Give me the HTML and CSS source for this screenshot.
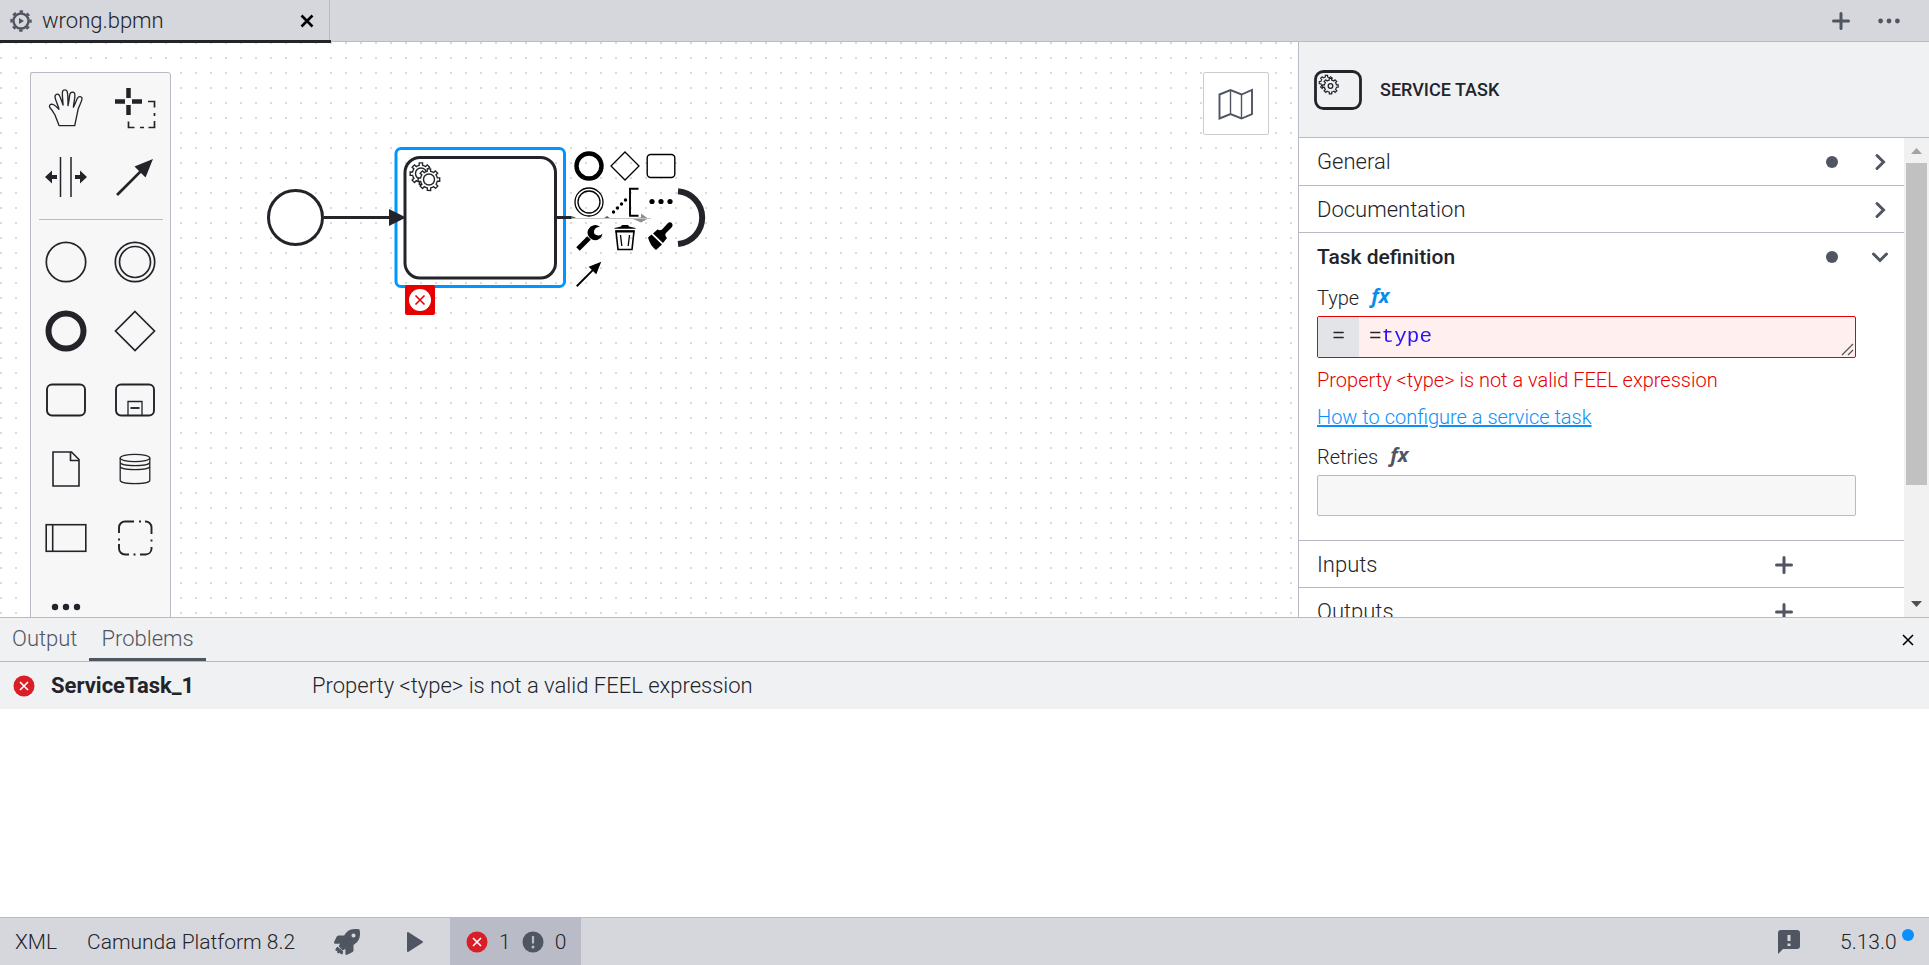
FILE: index.html
```html
<!DOCTYPE html>
<html lang="en">
<head>
<meta charset="utf-8">
<title>wrong.bpmn</title>
<link rel="stylesheet" href="styles.css">
</head>
<body>
<svg class="defs" width="0" height="0" aria-hidden="true">
  <symbol id="gear" viewBox="-9 -9 18 18" overflow="visible">
    <path d="m 1.11,7.3 v -1.71335 c 0.352326,-0.0705 0.703932,-0.17838 1.047628,-0.32133 0.344416,-0.14465 0.665822,-0.32133 0.966377,-0.52145 l 1.19431,1.18005 1.567487,-1.57688 -1.195028,-1.18014 c 0.403376,-0.61394 0.683079,-1.29908 0.825447,-2.01824 l 1.622133,-0.01 v -2.2196 l -1.636514,0.01 c -0.07333,-0.35153 -0.178319,-0.70024 -0.323564,-1.04372 -0.145244,-0.34406 -0.321407,-0.6644 -0.522735,-0.96217 l 1.131035,-1.13631 -1.583305,-1.56293 -1.129598,1.13589 c -0.614052,-0.40108 -1.302883,-0.68093 -2.022633,-0.82247 l 0.0093,-1.61852 h -2.241173 l 0.0042,1.63124 c -0.353763,0.0736 -0.705369,0.17977 -1.049785,0.32371 -0.344415,0.14437 -0.665102,0.32092 -0.9635006,0.52006 l -1.1698628,-1.15823 -1.5667691,1.5792 1.1684265,1.15669 c -0.4026573,0.61283 -0.68308,1.29797 -0.8247287,2.01713 l -1.6588041,0.003 v 2.22174 l 1.6724648,-0.006 c 0.073327,0.35077 0.1797598,0.70243 0.3242851,1.04472 0.1452428,0.34448 0.3214064,0.6644 0.5227339,0.96066 l -1.1993431,1.19723 1.5840256,1.56011 1.1964668,-1.19348 c 0.6140517,0.40346 1.3028827,0.68232 2.0233517,0.82331 l 0.0007,1.69892 z"/>
  </symbol>
  <symbol id="error" viewBox="0 0 22 22">
    <circle cx="11" cy="11" r="10.5" fill="#da1e28"/>
    <path d="M7 7l8 8M15 7l-8 8" stroke="#fff" stroke-width="1.6"/>
  </symbol>
  <symbol id="plus" viewBox="0 0 18 18">
    <path d="M9 1.500v15M1.500 9h15" stroke="currentColor" stroke-width="3" stroke-linecap="round"/>
  </symbol>
  <symbol id="arrow" viewBox="0 0 36 36">
    <path d="M1 35L25 11" stroke="currentColor" stroke-width="2.6"/>
    <path d="M35 1L17.500 8l10.500 10.500z" fill="currentColor"/>
  </symbol>
</svg>

<header class="tabbar">
  <div class="tab">
    <svg class="tab-icon" viewBox="0 0 22 22" width="22" height="22" aria-hidden="true">
      <circle cx="11" cy="11" r="7.500" fill="none" stroke="#505562" stroke-width="2.400"/>
      <circle cx="11" cy="11" r="9.500" fill="none" stroke="#505562" stroke-width="2.400" stroke-dasharray="3.500 3.961" stroke-dashoffset="1.750"/>
      <path d="M9 8v6l5-3z" fill="#505562"/>
    </svg>
    <a class="tab-name" href="#wrong">wrong.bpmn</a>
    <button class="icon-btn tab-close" aria-label="Close tab">
      <svg viewBox="0 0 14 14" width="14" height="14"><path d="M1.500 1.500l11 11M12.500 1.500l-11 11" stroke="#000" stroke-width="2.600"/></svg>
    </button>
  </div>
  <div class="tab-actions">
    <button class="icon-btn" aria-label="New tab"><svg width="18" height="18"><use href="#plus"/></svg></button>
    <button class="icon-btn" aria-label="More tabs"><svg viewBox="0 0 22 6" width="22" height="6" fill="#505562"><circle cx="2.600" cy="3" r="2.400"/><circle cx="11" cy="3" r="2.400"/><circle cx="19.400" cy="3" r="2.400"/></svg></button>
  </div>
</header>

<main class="workspace">
  <section class="canvas" id="wrong" aria-label="Diagram">
    <svg class="diagram" width="1298" height="575" role="img" aria-label="Start event, service task, end event">
      <rect x="396" y="106.500" width="168.500" height="138" rx="5" fill="none" stroke="#0095ff" stroke-width="3"/>
      <g fill="none" stroke="#22242a" stroke-width="3">
        <circle cx="295.500" cy="175.500" r="27" fill="#fff"/>
        <path d="M324 175.500h70"/>
        <rect x="405" y="115.500" width="150.500" height="120.500" rx="15" fill="#fff"/>
        <path d="M389 167l17 8.500-17 8.500z" fill="#22242a" stroke="none"/>
        <path d="M556 175.500h15"/>
        <path d="M678 149.200a26.500 26.500 0 0 1 0 52.800" stroke-width="6"/>
        <g stroke-width=".9" fill="#fff">
          <use href="#gear" x="-9" y="-9" width="18" height="18" transform="translate(421 131.500) scale(1.5)"/>
          <circle cx="421" cy="131.500" r="5.500" stroke-width="1.400"/>
          <use href="#gear" x="-9" y="-9" width="18" height="18" transform="translate(429 137.500) scale(1.5)"/>
          <circle cx="429" cy="137.500" r="5.500" stroke-width="1.400"/>
        </g>
      </g>
      <path d="M571 174l5 1.500-5 1.500zM603 177l4-3 4 3z" fill="#55565c"/>
      <path d="M632 176.500l9-1v-4l7 5-7 4z" fill="#8d8e92"/>
      <path d="M572 176.500h79" stroke="#c4c5c8"/>
    </svg>

    <nav class="palette" aria-label="Tools">
      <button class="tool" aria-label="Hand tool"><svg viewBox="0 0 42 42" width="42" height="42" fill="none" stroke="#22242a" stroke-width="1.200" stroke-linejoin="round"><path d="M17 38.500h14l3-15c1-3 4-9 3.500-10.500-.8-2-3-1.500-4 0-1 2-2.500 6.500-3.700 8.500.3-5 2.300-10.500 1-13-1-1.500-3.500-1-4 .5-.7 3-.8 7-1.800 11 0-4-.2-11-.7-13-.7-2-3.600-2-4.200 0-.5 3 .4 9 .5 12.500-1.200-3-2.200-7.500-3.500-9.300-1.200-1.500-3.700-.7-3.700 1.200 0 3.500 3 8.500 3.500 12-2-1.800-4-4.800-6.500-4.800-1.800.2-2.500 2-1.500 3.400 2 2 3.300 4.500 4.600 7 1 3 2.500 6 3.500 9.500z" transform="translate(-5 -3) scale(1.12 1.08)"/></svg></button>
      <button class="tool" aria-label="Lasso tool"><svg viewBox="0 0 42 42" width="42" height="42" fill="none" stroke="#22242a"><path d="M14.500 1v10M14.500 18v10M1 14.500h10M18 14.500h10" stroke-width="4.500"/><path d="M34 14.500h6.500v6M40.500 26v3M40.500 34v6.500h-6M30 40.500h-4M20.500 40.500h-6v-6" stroke-width="1.700"/></svg></button>
      <button class="tool" aria-label="Space tool"><svg viewBox="0 0 42 42" width="42" height="42" fill="#22242a"><path d="M15.500 1v40M26 1v40" stroke="#22242a" stroke-width="1.500"/><path d="M0 21l7-6.500v4.500h5v4h-5v4.500zM42 21l-7-6.500v4.500h-5v4h5v4.500z"/></svg></button>
      <button class="tool" aria-label="Connect tool"><svg width="38" height="38"><use href="#arrow"/></svg></button>
      <hr class="palette-line">
      <button class="tool" aria-label="Start event"><svg viewBox="0 0 42 42" width="42" height="42" fill="none" stroke="#22242a"><circle cx="21" cy="21" r="19.700" stroke-width="1.700"/></svg></button>
      <button class="tool" aria-label="Intermediate event"><svg viewBox="0 0 42 42" width="42" height="42" fill="none" stroke="#22242a" stroke-width="1.700"><circle cx="21" cy="21" r="19.700"/><circle cx="21" cy="21" r="15.500"/></svg></button>
      <button class="tool" aria-label="End event"><svg viewBox="0 0 42 42" width="42" height="42" fill="none" stroke="#22242a"><circle cx="21" cy="21" r="17.500" stroke-width="6"/></svg></button>
      <button class="tool" aria-label="Gateway"><svg viewBox="0 0 42 42" width="42" height="42" fill="none" stroke="#22242a" stroke-width="1.700"><path d="M21 1.500L40.500 21 21 40.500 1.500 21z"/></svg></button>
      <button class="tool" aria-label="Task"><svg viewBox="0 0 42 42" width="42" height="42" fill="none" stroke="#22242a" stroke-width="1.900"><rect x="2" y="5.500" width="38" height="31" rx="5"/></svg></button>
      <button class="tool" aria-label="Sub-process"><svg viewBox="0 0 42 42" width="42" height="42" fill="none" stroke="#22242a" stroke-width="1.900"><rect x="2" y="5.500" width="38" height="31" rx="5"/><path d="M14 36v-13.500h14V36" stroke-width="1.300"/><path d="M16.500 29h9"/></svg></button>
      <button class="tool" aria-label="Data object"><svg viewBox="0 0 42 42" width="42" height="42" fill="none" stroke="#22242a" stroke-width="1.600"><path d="M8 4h18.500l7.500 7.500V38H8zM25.500 4v8.500H34"/></svg></button>
      <button class="tool" aria-label="Data store"><svg viewBox="0 0 42 42" width="42" height="42" fill="none" stroke="#22242a" stroke-width="1.300"><ellipse cx="21" cy="10" rx="14.800" ry="3.700"/><path d="M6.200 10v22.300c0 4.500 29.600 4.500 29.600 0V10M6.200 14.300c0 4.500 29.600 4.500 29.600 0M6.200 18.300c0 4.500 29.600 4.500 29.600 0"/></svg></button>
      <button class="tool" aria-label="Pool"><svg viewBox="0 0 42 42" width="42" height="42" fill="none" stroke="#22242a" stroke-width="1.600"><rect x="1.200" y="7.700" width="39.600" height="26.600"/><path d="M7.700 8v26"/></svg></button>
      <button class="tool" aria-label="Group"><svg viewBox="0 0 42 42" width="42" height="42" fill="none" stroke="#22242a" stroke-width="1.900"><path d="M5 16v-5.500a6 6 0 0 1 6-6h9M25 4.500h2M31 4.500a6 6 0 0 1 6.500 6V17M37.500 22.500v2M37.500 30v2a6 6 0 0 1-6 5.500H26M21.500 37.500h-2M15 37.500h-4a6 6 0 0 1-6-6V27M5 23.500v-2"/></svg></button>
      <button class="tool" aria-label="More elements"><svg viewBox="0 0 42 42" width="42" height="42" fill="#22242a"><circle cx="10" cy="21" r="3.200"/><circle cx="21" cy="21" r="3.200"/><circle cx="32" cy="21" r="3.200"/></svg></button>
    </nav>

    <div class="context-pad">
      <button class="pad" aria-label="Append end event"><svg viewBox="0 0 30 30" width="30" height="30" fill="none" stroke="#000"><circle cx="15" cy="15" r="12.500" stroke-width="4.400"/></svg></button>
      <button class="pad" aria-label="Append gateway"><svg viewBox="0 0 30 30" width="30" height="30" fill="none" stroke="#000" stroke-width="1.300"><path d="M15 1l14 14-14 14L1 15z"/></svg></button>
      <button class="pad" aria-label="Append task"><svg viewBox="0 0 30 30" width="30" height="30" fill="none" stroke="#000" stroke-width="1.400"><rect x="1.200" y="3.500" width="27.600" height="23" rx="3.500"/></svg></button>
      <button class="pad" aria-label="Append intermediate event"><svg viewBox="0 0 30 30" width="30" height="30" fill="none" stroke="#000" stroke-width="1.300"><circle cx="15" cy="15" r="14"/><circle cx="15" cy="15" r="11"/></svg></button>
      <button class="pad" aria-label="Add text annotation"><svg viewBox="0 0 30 30" width="30" height="30"><path d="M28.500 1.700H20v27h8.500" fill="none" stroke="#000" stroke-width="1.900"/><circle cx="3.500" cy="25" r="1.700"/><circle cx="7.500" cy="21" r="1.700"/><circle cx="11.500" cy="17" r="1.700"/><circle cx="15.500" cy="13" r="1.700"/></svg></button>
      <button class="pad" aria-label="Append element"><svg viewBox="0 0 30 30" width="30" height="30"><circle cx="6" cy="14.500" r="2.600"/><circle cx="15" cy="14.500" r="2.600"/><circle cx="24" cy="14.500" r="2.600"/></svg></button>
      <button class="pad" aria-label="Change element"><svg viewBox="0 0 30 30" width="30" height="30"><path d="M4 26L15 15" stroke="#000" stroke-width="5"/><path d="M26 4A7.500 7.500 0 1 0 28.500 10.500A5.500 5.500 0 0 1 20.500 11A5 5 0 0 1 26 4z"/></svg></button>
      <button class="pad" aria-label="Delete"><svg viewBox="0 0 30 30" width="30" height="30"><path d="M4.500 5L11 3.500 12 2h6l1 1.500L25.500 5v.8h-21z"/><path d="M6 8h18l-2 18.500H8z" fill="none" stroke="#000" stroke-width="1.600"/><path d="M5.500 8.500h19" stroke="#000" stroke-width="2"/><path d="M10.500 12l1.300 11M19.500 12l-1.300 11" stroke="#000" stroke-width="1.300"/></svg></button>
      <button class="pad" aria-label="Set color"><svg viewBox="0 0 30 30" width="30" height="30" overflow="visible"><path d="M2 14.500l3.500-3 10.500 10-6 5.500C6 24 3.500 20 2 14.500z"/><path d="M7 10.500L11.500 6.500c2 1 3 1 4.500 0L22 0c2.500-2 6 1 4 4l-6 6c-1.500 2-.5 3 1 5l-4 5z"/></svg></button>
      <button class="pad" aria-label="Connect"><svg width="26" height="26"><use href="#arrow"/></svg></button>
    </div>

    <button class="badge" aria-label="Show error">
      <svg viewBox="0 0 22 22" width="22" height="22"><circle cx="11" cy="11" r="11" fill="#fff"/><path d="M6.500 6.500l9 9M15.500 6.500l-9 9" stroke="#e60000" stroke-width="1.600"/></svg>
    </button>

    <button class="minimap" aria-label="Open minimap">
      <svg viewBox="0 0 36 32" width="36" height="32" fill="none" stroke="#505562" stroke-width="1.900"><path d="M1.500 6.500L12.500 2l11 4.500L34 2v24l-10.500 4.500L12.500 26l-11 4.500z"/><path d="M12.500 2v24M23.500 6.500v24" stroke-width="1.400"/></svg>
    </button>
  </section>

  <aside class="properties">
    <header class="element">
      <svg viewBox="0 0 48 40" width="48" height="40" fill="none" stroke="#22242a" aria-hidden="true">
        <rect x="1.500" y="1.500" width="45" height="37" rx="8" stroke-width="2.800"/>
        <g stroke-width="1.100" fill="#f0f1f3">
          <use href="#gear" x="-9" y="-9" width="18" height="18" transform="translate(12.500 12.500)"/>
          <use href="#gear" x="-9" y="-9" width="18" height="18" transform="translate(16.500 16) scale(1.08)"/>
          <circle cx="16.500" cy="16" r="2.300" stroke-width="1.300"/>
        </g>
      </svg>
      <h1>SERVICE TASK</h1>
    </header>
    <div class="scroll">
      <div class="groups">
        <section class="group"><button class="group-head"><span class="group-name">General</span><span class="dot"></span><svg class="chevron" viewBox="0 0 18 18" width="18" height="18"><path d="M6 2.500L12.500 9 6 15.500"/></svg></button></section>
        <section class="group"><button class="group-head"><span class="group-name">Documentation</span><svg class="chevron" viewBox="0 0 18 18" width="18" height="18"><path d="M6 2.500L12.500 9 6 15.500"/></svg></button></section>
        <section class="group">
          <button class="group-head open"><span class="group-name">Task definition</span><span class="dot"></span><svg class="chevron" viewBox="0 0 18 18" width="18" height="18"><path d="M2.500 6L9 12.500 15.500 6"/></svg></button>
          <div class="fields">
            <div class="label-row"><label for="type">Type</label><button class="fx on" aria-label="Toggle expression">fx</button></div>
            <div class="feel"><span class="feel-mark">=</span><textarea id="type" rows="1" spellcheck="false">=type</textarea><svg class="grip" viewBox="0 0 13 13" width="13" height="13" aria-hidden="true"><path d="M1 12L12 1M7 12l5-5" stroke="#555" stroke-width="1.300"/></svg></div>
            <p class="error-text">Property &lt;type&gt; is not a valid FEEL expression</p>
            <a class="help" href="#help">How to configure a service task</a>
            <div class="label-row retries"><label for="retries">Retries</label><button class="fx" aria-label="Toggle expression">fx</button></div>
            <input class="text" id="retries" type="text">
          </div>
        </section>
        <section class="group"><div class="group-head"><span class="group-name">Inputs</span><button class="icon-btn add" aria-label="Create input"><svg width="18" height="18"><use href="#plus"/></svg></button></div></section>
        <section class="group"><div class="group-head"><span class="group-name">Outputs</span><button class="icon-btn add" aria-label="Create output"><svg width="18" height="18"><use href="#plus"/></svg></button></div></section>
      </div>
      <div class="scrollbar" aria-hidden="true">
        <svg viewBox="0 0 25 25" width="25" height="25"><path d="M7 16l5.500-6 5.500 6z" fill="#a3a3a3"/></svg>
        <div class="track"><div class="thumb"></div></div>
        <svg viewBox="0 0 25 25" width="25" height="25"><path d="M7 9l5.500 6L18 9z" fill="#505050"/></svg>
      </div>
    </div>
  </aside>
</main>

<section class="panel">
  <div class="panel-tabs">
    <button class="panel-tab">Output</button>
    <button class="panel-tab active">Problems</button>
    <button class="icon-btn panel-close" aria-label="Close panel"><svg viewBox="0 0 12 12" width="12" height="12"><path d="M1 1l10 10M11 1L1 11" stroke="#000" stroke-width="1.600"/></svg></button>
  </div>
  <button class="problem">
    <svg width="22" height="22"><use href="#error"/></svg>
    <strong class="problem-id">ServiceTask_1</strong>
    <span>Property &lt;type&gt; is not a valid FEEL expression</span>
  </button>
</section>

<footer class="statusbar">
  <button class="status xml">XML</button>
  <button class="status platform">Camunda Platform 8.2</button>
  <button class="status deploy" aria-label="Deploy"><svg viewBox="0 0 512 512" width="26" height="26" fill="#505562"><path d="M505.120 19.094c-1.189-5.531-6.658-11-12.207-12.188C460.716 0 435.507 0 410.407 0 307.175 0 245.269 55.203 199.052 128H94.838c-16.348.016-35.557 11.875-42.887 26.484L2.516 253.297A28.400 28.400 0 0 0 0 264a24 24 0 0 0 24 24h103.800l-22.470 22.470c-11.365 11.360-12.996 32.257 0 45.250l50.900 50.905c11.156 11.187 32.156 13.156 45.277 0L224 384.156V488a24 24 0 0 0 24 24 28.560 28.560 0 0 0 10.707-2.516l98.728-49.390c14.629-7.297 26.508-26.500 26.508-42.860V312.797C456.600 266.484 512 204.390 512 101.703c0-25.203 0-50.406-6.880-82.610zM384 168a40 40 0 1 1 40-40 40 40 0 0 1-40 40z"/><path d="M70 350c-40 20-50 65-35 85l30-6c-8 22 0 42 15 52l36-14c8 22 30 34 50 32 15-35 20-50 5-70z"/></svg></button>
  <button class="status play" aria-label="Run"><svg viewBox="0 0 18 22" width="18" height="22"><path d="M2 2l14 9-14 9z" fill="#505562" stroke="#505562" stroke-width="2" stroke-linejoin="round"/></svg></button>
  <button class="status counts">
    <svg width="22" height="22"><use href="#error"/></svg><span>1</span>
    <svg viewBox="0 0 22 22" width="22" height="22"><circle cx="11" cy="11" r="10.500" fill="#505562"/><path d="M11 5v7.500" stroke="#b9bbc7" stroke-width="2.200"/><circle cx="11" cy="16" r="1.500" fill="#b9bbc7"/></svg><span>0</span>
  </button>
  <button class="status feedback" aria-label="Feedback"><svg viewBox="0 0 22 24" width="22" height="24"><path d="M3 0h16a3 3 0 0 1 3 3v13a3 3 0 0 1-3 3H5l-5 5V3a3 3 0 0 1 3-3z" fill="#505562"/><path d="M11 5v6M11 13.500v2.500" stroke="#d6d7dc" stroke-width="3"/></svg></button>
  <button class="status version">5.13.0<span class="update"></span></button>
</footer>
</body>
</html>
```

FILE: styles.css
```css
* { box-sizing: border-box; }
body {
  margin: 0;
  height: 100vh;
  display: flex;
  flex-direction: column;
  overflow: hidden;
  background: #fff;
  color: #22242a;
  font: 300 22px/28px Roboto, "Noto Sans", sans-serif;
}
button { font: inherit; color: inherit; background: none; border: 0; padding: 0; text-align: left; cursor: pointer; }
svg { display: block; flex: none; }
.defs { position: absolute; }
.icon-btn { display: flex; color: #505562; }

.tabbar { display: flex; flex: none; height: 42px; background: #d6d7dc; border-bottom: 1px solid #b9bac6; }
.tab {
  position: relative; display: flex; align-items: center; width: 330px; height: 42px;
  padding: 0 15px 0 10px; border-right: 1px solid #b9bac6;
}
.tab::after { content: ""; position: absolute; left: 0; right: -2px; bottom: -1px; height: 3px; background: #22242a; z-index: 1; }
.tab-name { margin-left: 10px; color: inherit; text-decoration: none; }
.tab-close { margin-left: auto; }
.tab-actions { display: flex; align-items: center; gap: 28px; margin-left: auto; padding-right: 29px; }

.workspace { display: flex; flex: 1; min-height: 0; }
.canvas {
  position: relative; flex: 1; overflow: hidden;
  background: radial-gradient(circle at 1px 1px, #dadada 1px, transparent 1px) 15px 0 / 15px 15px;
}
.diagram { position: absolute; left: 0; top: 0; }
.palette {
  position: absolute; left: 30px; top: 30px; width: 141px;
  display: grid; grid-template-columns: 69px 69px; background: #f7f7f8;
  border: 1px solid #b9bac6; border-radius: 3px;
}
.tool { display: grid; place-items: center; height: 69px; }
.palette-line { grid-column: 1 / 3; width: 124px; height: 1px; margin: 8px 8px 7px; border: 0; background: #b9bac6; }
.context-pad { position: absolute; left: 571px; top: 106px; display: grid; grid-template-columns: repeat(3, 36px); grid-auto-rows: 36px; }
.pad { display: grid; place-items: center; color: #000; }
.badge { position: absolute; left: 405px; top: 243px; width: 30px; height: 30px; display: grid; place-items: center; background: #e60000; border-radius: 2px; }
.minimap { position: absolute; right: 29px; top: 30px; width: 66px; height: 63px; display: grid; place-items: center; background: #fff; border: 1px solid #ccc; border-radius: 2px; }

.properties { display: flex; flex-direction: column; width: 631px; background: #fff; border-left: 1px solid #b9bac6; }
.element { display: flex; align-items: center; gap: 18px; flex: none; height: 96px; padding-left: 15px; background: #f0f1f3; border-bottom: 1px solid #b9bac6; }
.element h1 { margin: 0; font-size: 18px; font-weight: 500; }
.scroll { display: flex; flex: 1; min-height: 0; }
.groups { flex: 1; overflow: hidden; }
.group { border-bottom: 1px solid #b9bac6; }
.group-head { display: flex; align-items: center; width: 100%; height: 47px; padding: 1px 15px 0 18px; }
.group + .group .group-head { height: 46px; padding-top: 2px; }
.group-name { flex: 1; }
.open { font-size: 21px; font-weight: 500; }
.dot { width: 12px; height: 12px; margin-right: 33px; border-radius: 50%; background: #505562; }
.chevron { fill: none; stroke: #505562; stroke-width: 3; stroke-linecap: round; }
.add { margin-right: 96px; }
.fields { padding: 4px 48px 24px 18px; font-size: 20px; line-height: 28px; }
.label-row { display: flex; align-items: flex-start; gap: 12px; height: 33px; padding-top: 1px; }
.fx { color: #505562; font: italic 700 20px/24px "Noto Sans", sans-serif; }
.fx.on { color: #0b8ce8; }
.feel { position: relative; display: flex; height: 42px; border: 1px solid #e60000; border-radius: 2px; background: #ffefef; font: 21px/40px "Liberation Mono", monospace; }
.feel-mark { width: 41px; text-align: center; background: #e2e4e8; }
.feel textarea {
  flex: 1; height: 40px; padding: 0 10px; border: 0; outline: 0; resize: none; overflow: hidden; font: inherit; color: transparent;
  background: linear-gradient(to right, #22242a 22px, #2a14f5 22px); background-clip: text; -webkit-background-clip: text;
}
.grip { position: absolute; right: 1px; bottom: 1px; }
.error-text { margin: 8px 0 0; color: #e60000; }
.help { display: block; width: max-content; margin-top: 9px; color: #0b90fb; }
.retries { margin-top: 11px; }
.text { display: block; width: 100%; height: 41px; border: 1px solid #b9bac6; border-radius: 2px; background: #f7f7f8; font: inherit; }
.scrollbar { display: flex; flex-direction: column; width: 25px; background: #f1f1f1; }
.track { flex: 1; padding: 0 2px; }
.thumb { height: 75%; background: #c1c1c1; }

.panel { flex: none; height: 300px; border-top: 1px solid #b9bac6; background: #fff; }
.panel-tabs { display: flex; height: 44px; border-bottom: 1px solid #b9bac6; background: #f0f1f3; color: #505562; }
.panel-tab { height: 43px; padding: 0 12px 2px; }
.panel-tab.active { box-shadow: inset 0 -3px #505562; }
.panel-close { align-self: center; margin-left: auto; margin-right: 15px; }
.problem { display: flex; align-items: center; width: 100%; height: 47px; padding: 0 13px; background: #f0f1f3; }
.problem-id { width: 261px; margin-left: 16px; font-weight: 700; }

.statusbar { display: flex; flex: none; height: 48px; background: #d6d7dc; border-top: 1px solid #b9bac6; font-size: 21px; }
.status { display: flex; align-items: center; padding: 0 16px; }
.xml { width: 71px; padding-left: 15px; }
.platform { width: 247px; }
.deploy { width: 58px; }
.play { width: 74px; padding-left: 30px; }
.counts { gap: 11px; width: 131px; background: #b9bbc7; }
.feedback { margin-left: auto; width: 70px; }
.version { position: relative; width: 97px; padding-left: 8px; }
.update { position: absolute; left: 70px; top: 11px; width: 12px; height: 12px; border-radius: 50%; background: #0b90fb; }
```
